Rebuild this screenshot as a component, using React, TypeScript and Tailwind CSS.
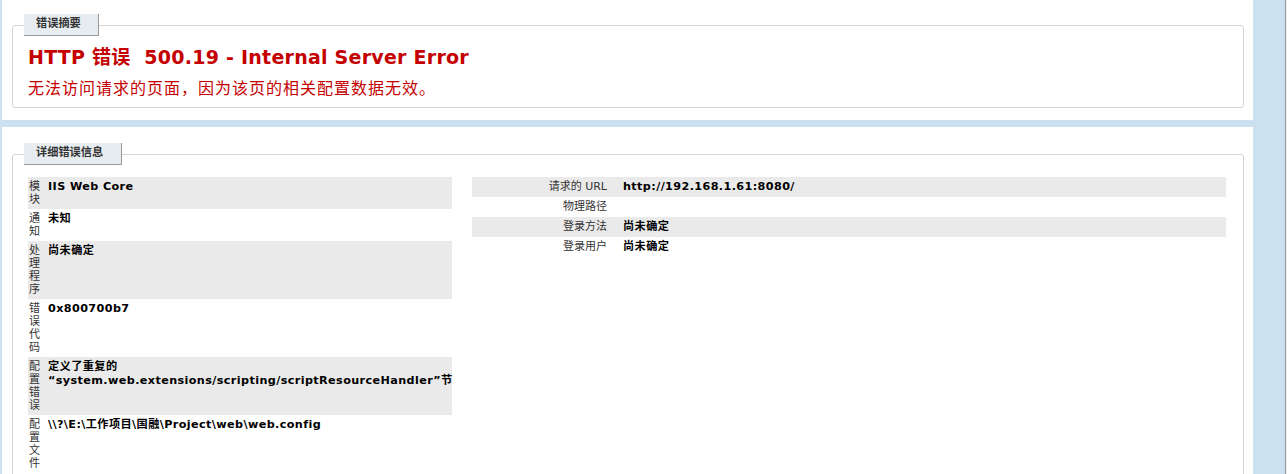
const leftRows = [
  { label: "模块", value: "IIS Web Core", alt: true },
  { label: "通知", value: "未知", alt: false },
  { label: "处理程序", value: "尚未确定", alt: true },
  { label: "错误代码", value: "0x800700b7", alt: false },
  {
    label: "配置错误",
    value: "定义了重复的 “system.web.extensions/scripting/scriptResourceHandler”节",
    alt: true,
  },
  { label: "配置文件", value: "\\\\?\\E:\\工作项目\\国融\\Project\\web\\web.config", alt: false },
];

const rightRows = [
  { label: "请求的 URL", value: "http://192.168.1.61:8080/", alt: true },
  { label: "物理路径", value: "", alt: false },
  { label: "登录方法", value: "尚未确定", alt: true },
  { label: "登录用户", value: "尚未确定", alt: false },
];

function Legend({ text, width }: { text: string; width: string }) {
  return (
    <legend
      className={`${width} h-[22px] -ml-[4px] pl-[12px] flex items-center bg-[#e7ecf0] border-r border-b border-[#9a9a9a] text-[11.2px] font-bold text-[#333]`}
    >
      {text}
    </legend>
  );
}

export default function App() {
  return (
    <div className="w-[1287px] h-[474px] overflow-hidden flex bg-[#cbe1ef] font-['DejaVu_Sans','Noto_Sans_CJK_SC',sans-serif] text-[#222]">
      <div className="ml-[2px] w-[1251px] flex flex-col gap-[7px]">
        {/* 错误摘要 */}
        <section className="h-[120px] shrink-0 bg-white pl-[10px] pr-[9px] pt-[14px]">
          <fieldset className="border border-[#d4d4d4] rounded-[3px] px-[15px] pb-[8px]">
            <Legend text="错误摘要" width="w-[75px]" />
            <h2 className="mt-[10px] text-[19px] leading-[23px] tracking-[0.25px] font-bold text-[#c40000]">
              HTTP 错误&nbsp; 500.19 - Internal Server Error
            </h2>
            <h3 className="mt-[10px] text-[16px] leading-[20px] tracking-[1px] text-[#c40000]">
              无法访问请求的页面，因为该页的相关配置数据无效。
            </h3>
          </fieldset>
        </section>

        {/* 详细错误信息 */}
        <section className="flex-1 bg-white pl-[10px] pr-[9px] pt-[16px]">
          <fieldset className="border border-[#d4d4d4] rounded-[3px] px-[15px] pb-[10px]">
            <Legend text="详细错误信息" width="w-[98px]" />
            <div className="mt-[12px] flex gap-[20px]">
              <div className="w-[424px] flex flex-col">
                {leftRows.map((r) => (
                  <div key={r.label} className={`flex ${r.alt ? "bg-[#eaeaea]" : ""}`}>
                    <div className="w-[16px] shrink-0 pl-[1px] py-[3px] text-[11px] leading-[13px] text-[#333] break-all">
                      {r.label}
                    </div>
                    <div className="flex-1 pl-[4px] py-[3px] text-[11.2px] leading-[14px] tracking-[0.4px] font-bold text-black">
                      {r.value}
                    </div>
                  </div>
                ))}
              </div>
              <div className="w-[754px] flex flex-col">
                {rightRows.map((r) => (
                  <div key={r.label} className={`h-[20px] flex items-center ${r.alt ? "bg-[#eaeaea]" : ""}`}>
                    <div className="w-[140px] shrink-0 pr-[5px] text-right text-[11px] text-[#333]">{r.label}</div>
                    <div className="pl-[11px] text-[11.2px] tracking-[0.4px] font-bold text-black">{r.value}</div>
                  </div>
                ))}
              </div>
            </div>
          </fieldset>
        </section>
      </div>
      <div className="flex-1" />
      <div className="w-[1px] bg-[#9a9a9a]" />
      <div className="w-[1px] bg-[#eeeeee]" />
    </div>
  );
}
